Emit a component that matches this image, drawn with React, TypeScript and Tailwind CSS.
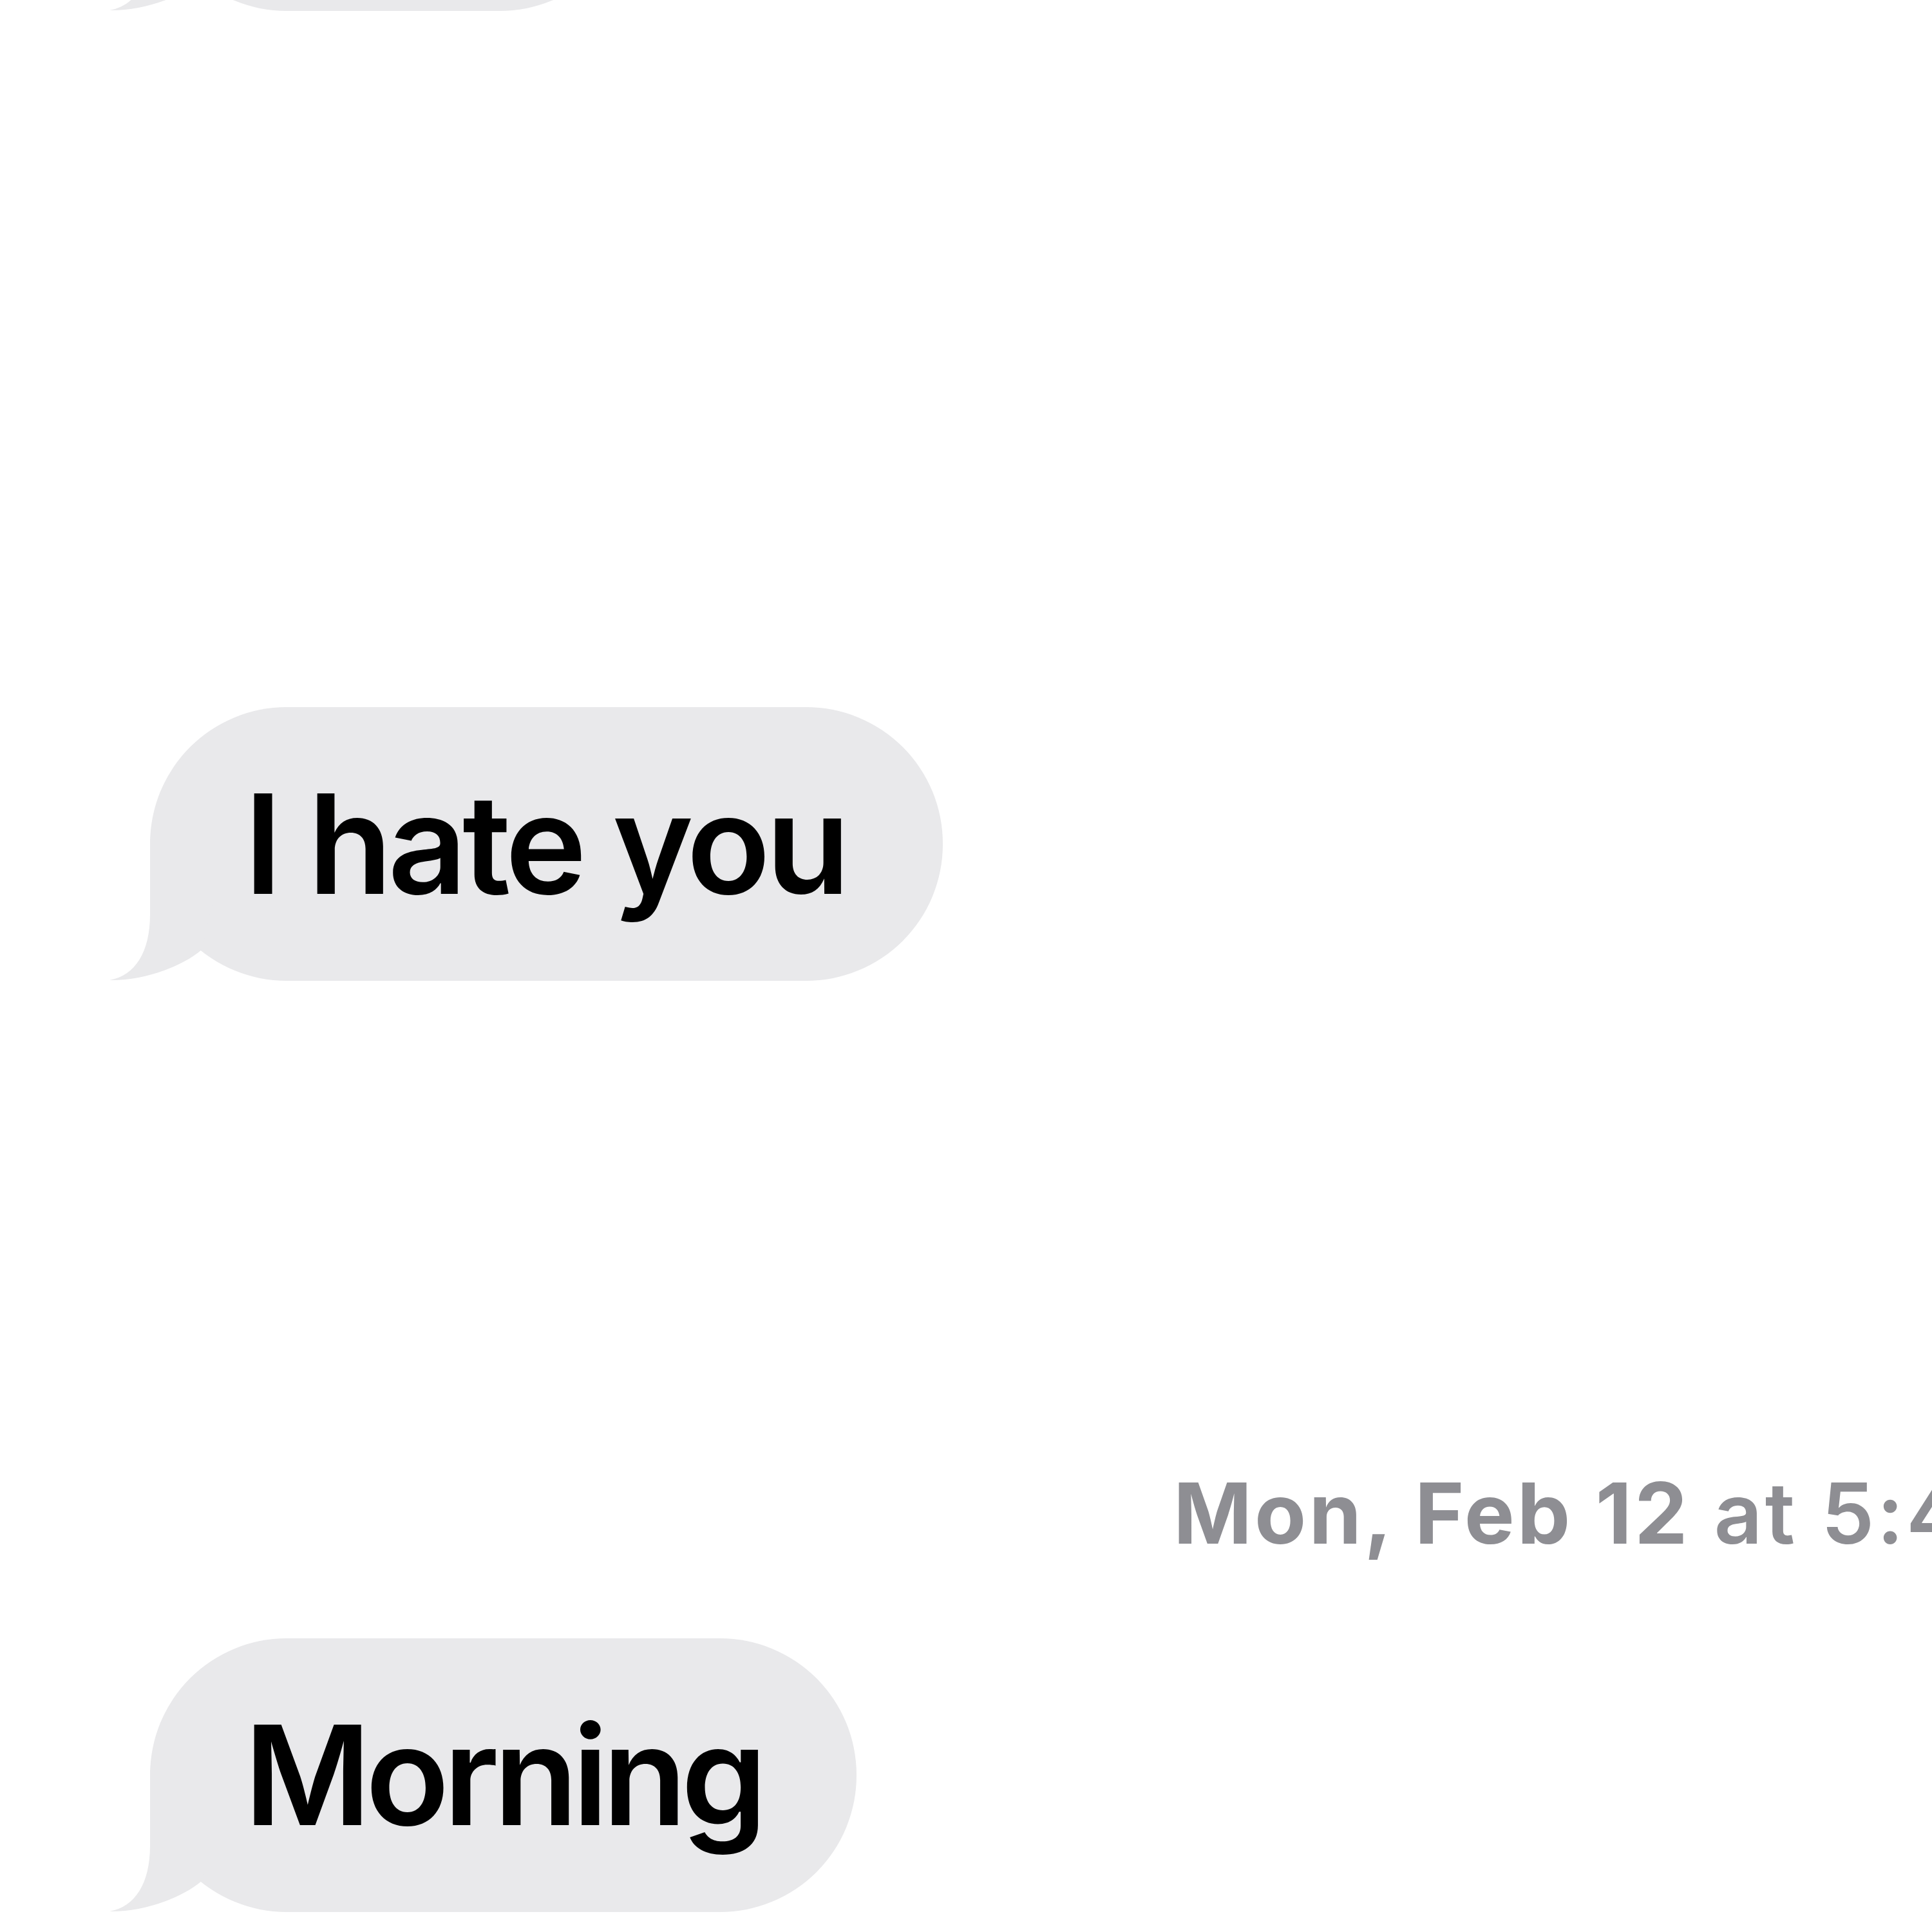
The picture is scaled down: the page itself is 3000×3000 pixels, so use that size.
const Tail = () => (
  <svg
    className="absolute left-[-63px] bottom-0"
    width="160"
    height="220"
    viewBox="0 0 160 220"
    aria-hidden="true"
  >
    <path
      d="M63 0 L63 117 C63 175 40 212 0 219 C50 220 110 200 143 172 L160 100 L160 0 Z"
      fill="#e9e9eb"
    />
  </svg>
);

interface BubbleProps {
  text?: string;
  width: string;
  tracking?: string;
  className?: string;
}

const Bubble = ({ text, width, tracking = 'tracking-[-8px]', className = '' }: BubbleProps) => {
  return (
    <div className={`relative h-[425px] ${width} ${className} ml-[233px] flex items-center rounded-[212px] bg-[#e9e9eb] pl-[146px] shrink-0`}>
      <Tail />
      {text && (
        <span className={`relative text-[214px] leading-none font-semibold ${tracking} text-black whitespace-nowrap`}>
          {text}
        </span>
      )}
    </div>
  );
};

const App = () => {
  return (
    <div
      className="w-[3000px] h-[3000px] overflow-hidden bg-white flex flex-col"
      style={{ fontFamily: 'Inter, "Liberation Sans", sans-serif' }}
    >
      <Bubble width="w-[755px]" className="mt-[-408px]" />

      <Bubble text="I hate you" width="w-[1231px]" tracking="tracking-[-7px]" className="mt-[1081px]" />

      {/* timestamp */}
      <div className="mt-[761px] pl-[1822px] text-[131px] leading-none tracking-[4px] text-[#8e8e93] whitespace-nowrap">
        <span className="font-bold">Mon, Feb 12</span>
        <span className="font-semibold"> at 5:41 PM</span>
      </div>

      <Bubble text="Morning" width="w-[1097px]" tracking="tracking-[-9px]" className="mt-[129px]" />
    </div>
  );
};

export default App;
